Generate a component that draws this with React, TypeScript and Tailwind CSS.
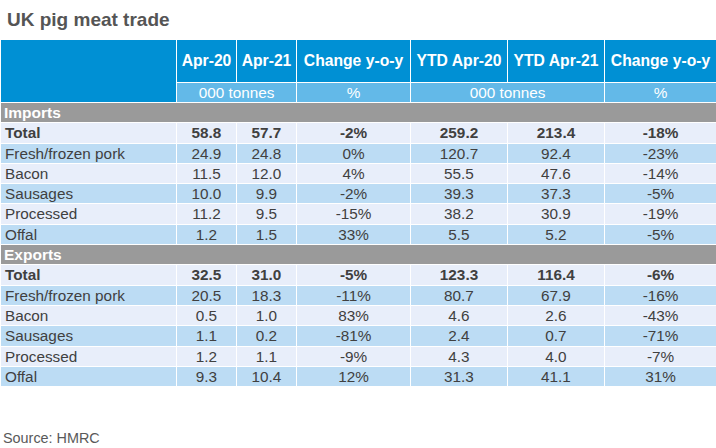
import React from "react";

type Row = { label: string; v: string[]; total?: boolean };

const imports: Row[] = [
  { label: "Total", v: ["58.8", "57.7", "-2%", "259.2", "213.4", "-18%"], total: true },
  { label: "Fresh/frozen pork", v: ["24.9", "24.8", "0%", "120.7", "92.4", "-23%"] },
  { label: "Bacon", v: ["11.5", "12.0", "4%", "55.5", "47.6", "-14%"] },
  { label: "Sausages", v: ["10.0", "9.9", "-2%", "39.3", "37.3", "-5%"] },
  { label: "Processed", v: ["11.2", "9.5", "-15%", "38.2", "30.9", "-19%"] },
  { label: "Offal", v: ["1.2", "1.5", "33%", "5.5", "5.2", "-5%"] },
];

const exportsRows: Row[] = [
  { label: "Total", v: ["32.5", "31.0", "-5%", "123.3", "116.4", "-6%"], total: true },
  { label: "Fresh/frozen pork", v: ["20.5", "18.3", "-11%", "80.7", "67.9", "-16%"] },
  { label: "Bacon", v: ["0.5", "1.0", "83%", "4.6", "2.6", "-43%"] },
  { label: "Sausages", v: ["1.1", "0.2", "-81%", "2.4", "0.7", "-71%"] },
  { label: "Processed", v: ["1.2", "1.1", "-9%", "4.3", "4.0", "-7%"] },
  { label: "Offal", v: ["9.3", "10.4", "12%", "31.3", "41.1", "31%"] },
];

const cols = "grid grid-cols-[175px_59px_59px_113px_96px_96px_1fr] gap-x-px";

function DataRow({ row, idx }: { row: Row; idx: number }) {
  const bg = idx % 2 === 0 ? "bg-[#e8eefa]" : "bg-[#bcdcf4]";
  const weight = row.total ? "font-bold" : "font-normal";
  return (
    <div className={`${cols} border-t border-white h-[20.3px] text-[15.3px] leading-none text-[#404040] ${weight}`}>
      <div className={`${bg} flex items-center pl-[4px]`}>{row.label}</div>
      {row.v.map((x, i) => (
        <div key={i} className={`${bg} flex items-center justify-center`}>
          {x}
        </div>
      ))}
    </div>
  );
}

function Section({ title, rows }: { title: string; rows: Row[] }) {
  return (
    <>
      <div className="border-t border-white h-[20.3px] bg-[#9a9a9a] flex items-center pl-[3px] text-white font-bold text-[15.5px] leading-none">
        {title}
      </div>
      {rows.map((r, i) => (
        <DataRow key={i} row={r} idx={i} />
      ))}
    </>
  );
}

export default function App() {
  return (
    <div
      className="w-[716px] h-[448px] bg-white overflow-hidden"
      style={{ fontFamily: '"Liberation Sans", Arial, sans-serif' }}
    >
      <div className="h-[40px] pt-[9px] pl-[7px] text-[19px] leading-[22px] font-bold text-[#555555]">
        UK pig meat trade
      </div>
      <div className="ml-px w-[715px]">
        <div className="grid grid-cols-[175px_59px_59px_113px_96px_96px_1fr] grid-rows-[42px_19px] gap-px bg-white">
          <div className="row-span-2 bg-[#0090d4]" />
          <div className="bg-[#0090d4] text-white font-bold text-[15.7px] flex items-center justify-center">Apr-20</div>
          <div className="bg-[#0090d4] text-white font-bold text-[15.7px] flex items-center justify-center">Apr-21</div>
          <div className="bg-[#0090d4] text-white font-bold text-[15.7px] flex items-center justify-center">Change y-o-y</div>
          <div className="bg-[#0090d4] text-white font-bold text-[15.7px] flex items-center justify-center">YTD Apr-20</div>
          <div className="bg-[#0090d4] text-white font-bold text-[15.7px] flex items-center justify-center">YTD Apr-21</div>
          <div className="bg-[#0090d4] text-white font-bold text-[15.7px] flex items-center justify-center">Change y-o-y</div>
          <div className="col-span-2 bg-[#63b9e8] text-white text-[15.3px] leading-none flex items-center justify-center">000 tonnes</div>
          <div className="bg-[#63b9e8] text-white text-[15.3px] leading-none flex items-center justify-center">%</div>
          <div className="col-span-2 bg-[#63b9e8] text-white text-[15.3px] leading-none flex items-center justify-center">000 tonnes</div>
          <div className="bg-[#63b9e8] text-white text-[15.3px] leading-none flex items-center justify-center">%</div>
        </div>
        <Section title="Imports" rows={imports} />
        <Section title="Exports" rows={exportsRows} />
      </div>
      <div className="mt-[45px] pl-[3px] text-[14.4px] leading-none text-[#595959]">Source: HMRC</div>
    </div>
  );
}
